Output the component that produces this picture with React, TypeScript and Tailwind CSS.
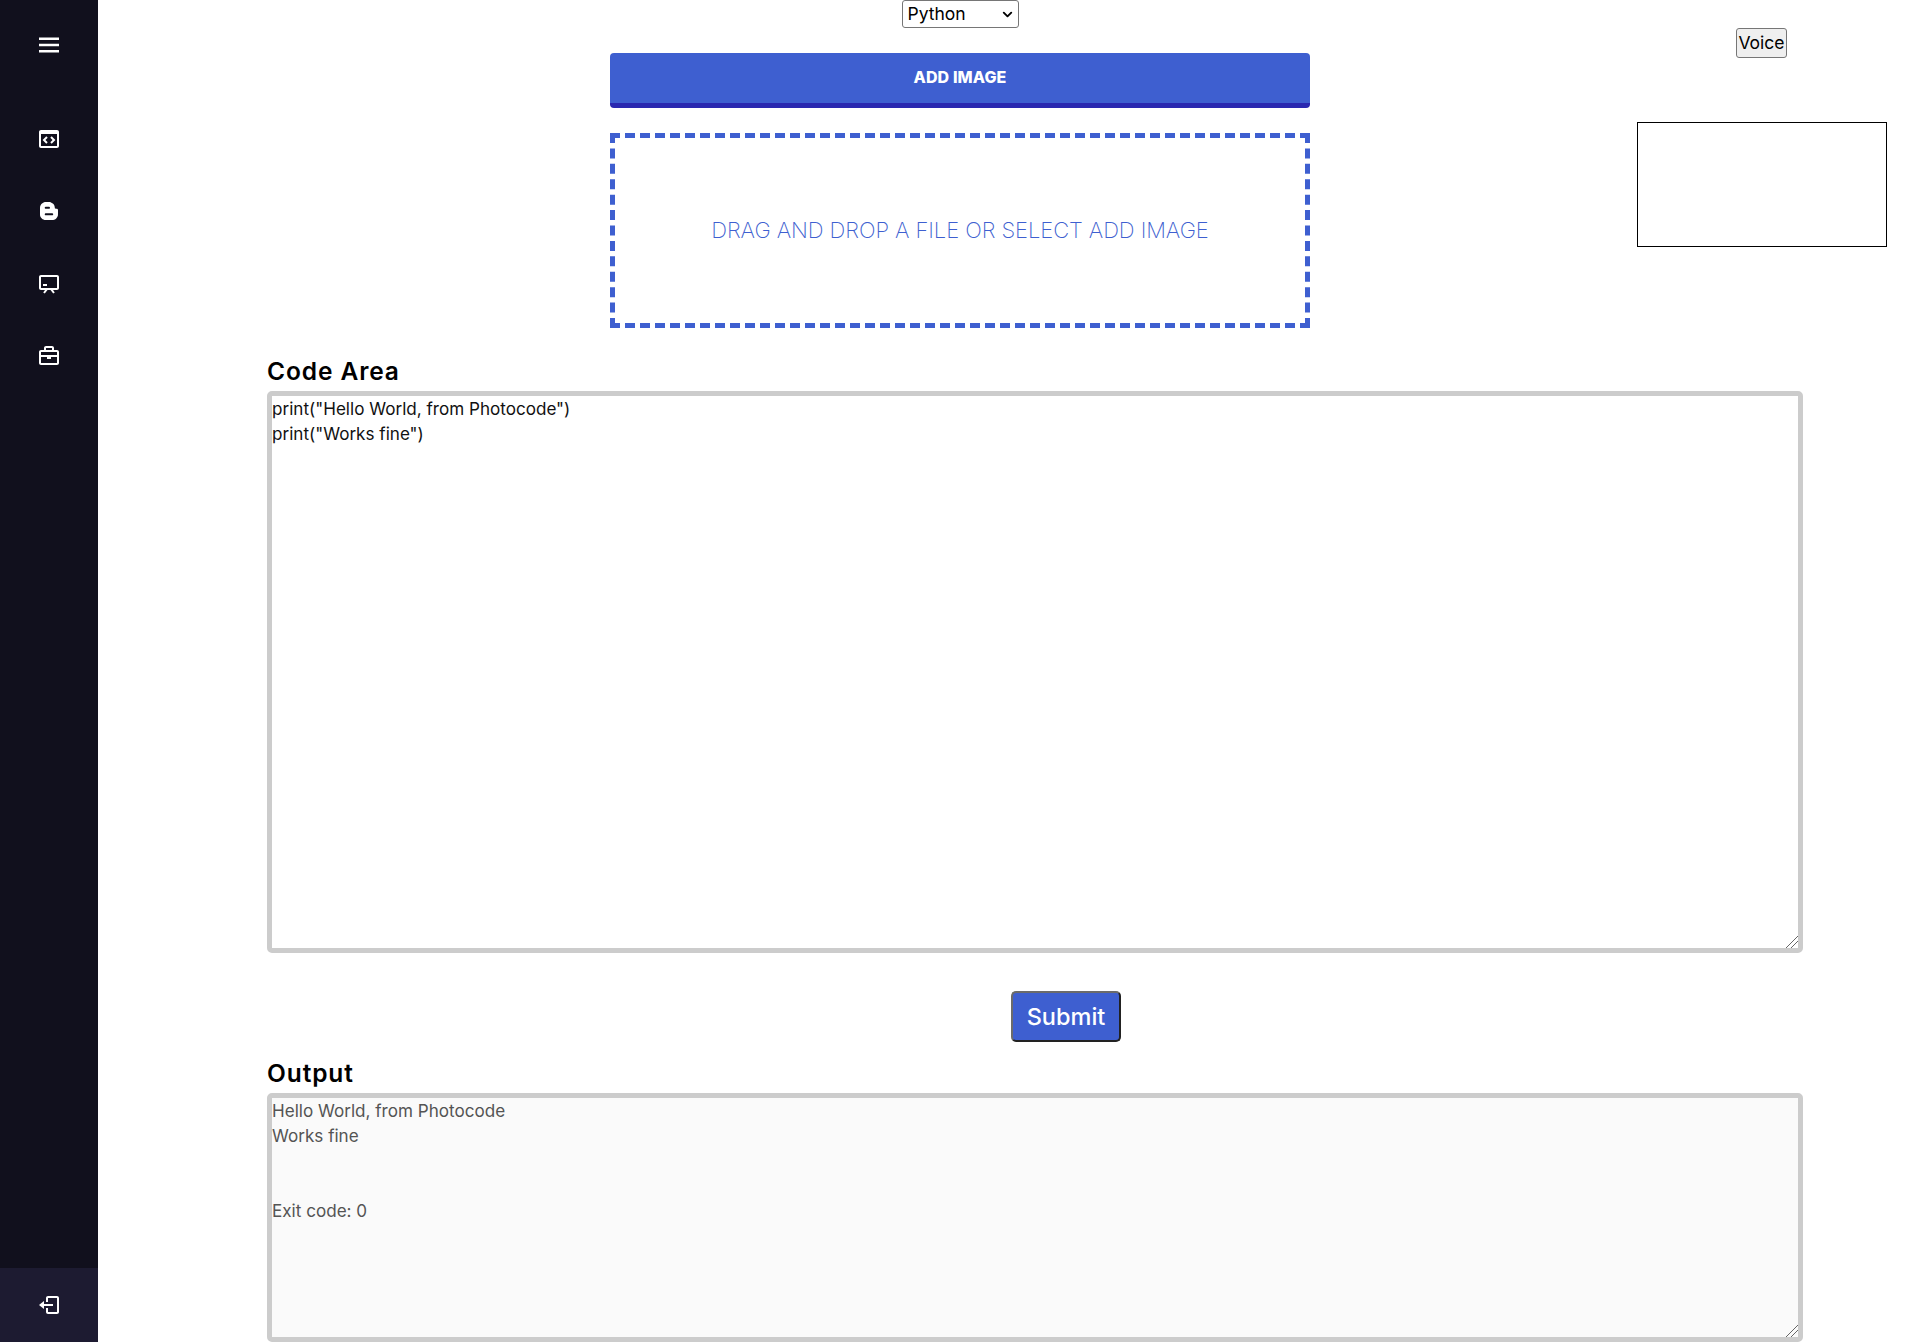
import { ChevronDown } from 'lucide-react';
import { BiMenu, BiCodeBlock, BiLogoBlogger, BiChalkboard, BiBriefcase, BiLogOut } from 'react-icons/bi';

const navIcons = [BiCodeBlock, BiLogoBlogger, BiChalkboard, BiBriefcase];

// grip of the textarea, the native one is smaller than in the picture
const grip =
  '[&::-webkit-resizer]:bg-[linear-gradient(135deg,transparent_57%,#666_57%,#666_63%,transparent_63%,transparent_74%,#666_74%,#666_80%,transparent_80%)]';

function Sidebar() {
  return (
    <aside className="w-[98px] shrink-0 h-full bg-[#11101d] flex flex-col text-white">
      <div className="h-[90px] flex items-center justify-center">
        <BiMenu className="w-[30px] h-[30px]" />
      </div>
      <nav className="mt-[12.8px] flex flex-col">
        {navIcons.map((Icon, i) => (
          <a key={i} className="h-[72.4px] flex items-center justify-center">
            <Icon className="w-[24px] h-[24px]" />
          </a>
        ))}
      </nav>
      <div className="mt-auto h-[74px] bg-[#1d1b31] flex items-center justify-center">
        <BiLogOut className="w-[24px] h-[24px]" />
      </div>
    </aside>
  );
}

export default function App() {
  return (
    <div className="w-[1920px] h-[1342px] overflow-hidden flex bg-white font-['Inter','Liberation_Sans',sans-serif]">
      <Sidebar />
      <main className="flex-1 min-w-0 pl-[169px]">
        <div className="flex">
          <div className="w-[700px] ml-[343px] shrink-0 flex flex-col items-center">
            <div className="relative w-[117px] h-[28px]">
              <select
                defaultValue="Python"
                className="appearance-none w-full h-full pl-[5px] pb-[2px] border border-[#767676] rounded-[3px] text-[17.5px] text-black bg-white"
              >
                <option>Python</option>
                <option>Java</option>
                <option>C++</option>
              </select>
              <ChevronDown className="absolute right-[4px] top-[7px] w-[15px] h-[15px] text-black pointer-events-none" strokeWidth={3} />
            </div>
            <button className="mt-[25px] w-full h-[55px] pb-[3px] bg-[#3e5fd0] border-b-[5px] border-[#2a28b0] rounded-[4px] text-white text-[16px] font-extrabold tracking-[0.1px]">
              ADD IMAGE
            </button>
            <div className="mt-[25px] w-full h-[195px] border-[5px] border-dashed border-[#3e5fd0] flex items-center justify-center text-[#3e5fd0] text-[22px] font-extralight tracking-[-0.08px]">
              DRAG AND DROP A FILE OR SELECT ADD IMAGE
            </div>
          </div>
          <div className="ml-[327px] w-[250px] shrink-0 flex flex-col items-center pt-[28px]">
            <button className="-ml-[1px] w-[51px] h-[30px] border border-[#767676] rounded-[3px] bg-[#efefef] text-[17.5px] text-black">
              Voice
            </button>
            <div className="mt-[64px] w-[250px] h-[125px] border border-black" />
          </div>
        </div>

        <h2 className="mt-[25px] mb-[2px] h-[36px] leading-[36px] text-[24.5px] font-semibold text-black tracking-[0.9px]">Code Area</h2>
        <textarea
          className={`block w-[1536px] h-[562px] border-[5px] border-[#cccccc] rounded-[5px] text-[17.1px] leading-[25px] text-[#111] bg-white outline-none ${grip}`}
          defaultValue={'print("Hello World, from Photocode")\nprint("Works fine")'}
        />

        <div className="mt-[38px] ml-[744px]">
          <button className="w-[110px] h-[51px] bg-[#3e5fd0] text-white text-[23.5px] font-medium rounded-[5px] border-2 border-solid border-t-[#6b6b6b] border-l-[#6b6b6b] border-r-[#222222] border-b-[#222222]">
            Submit
          </button>
        </div>

        <h2 className="mt-[13px] mb-[2px] h-[36px] leading-[36px] text-[24.5px] font-semibold text-black tracking-[0.9px]">Output</h2>
        <textarea
          readOnly
          className={`block w-[1536px] h-[249px] border-[5px] border-[#cccccc] rounded-[5px] text-[17.1px] leading-[25px] text-[#545454] bg-[#fafafa] outline-none ${grip}`}
          defaultValue={'Hello World, from Photocode\nWorks fine\n\n\nExit code: 0'}
        />
      </main>
    </div>
  );
}
